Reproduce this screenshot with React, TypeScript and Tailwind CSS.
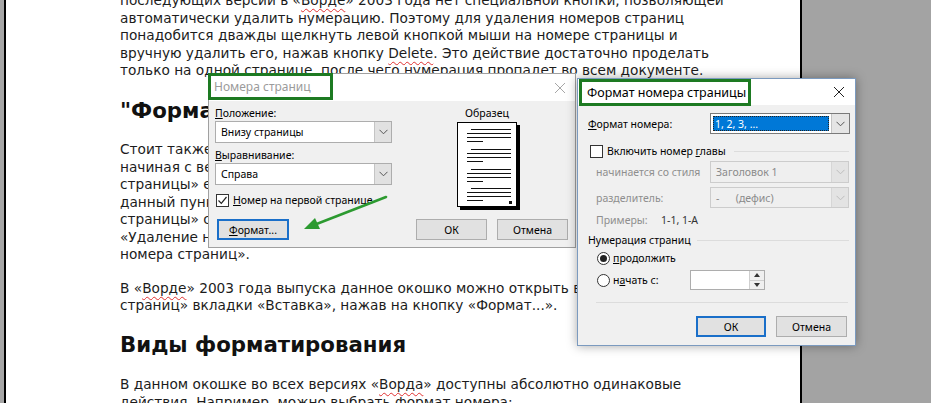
import React from "react";

const ui = "font-['Noto_Sans',sans-serif] text-[10.5px] leading-[16px] text-black whitespace-nowrap";

const Squiggle = ({ children }: { children: React.ReactNode }) => (
  <span className="underline decoration-wavy decoration-[#e03030] decoration-1 underline-offset-[3px]">
    {children}
  </span>
);

const Chevron = ({ color = "#555" }: { color?: string }) => (
  <svg width="9" height="6" viewBox="0 0 9 6">
    <path d="M0.5 0.8 L4.5 4.8 L8.5 0.8" fill="none" stroke={color} strokeWidth="1" />
  </svg>
);

const CloseX = () => (
  <svg width="12" height="12" viewBox="0 0 12 12">
    <path d="M1 1 L11 11 M11 1 L1 11" stroke="#222" strokeWidth="1" />
  </svg>
);

const Select = ({
  value,
  w,
  h = 22,
  disabled = false,
}: {
  value: React.ReactNode;
  w: number;
  h?: number;
  disabled?: boolean;
}) => (
  <div
    style={{ width: w, height: h }}
    className={`flex shrink-0 border ${disabled ? "border-[#cccccc] bg-[#efefef] text-[#8a8a8a]" : "border-[#adadad] bg-white"}`}
  >
    <div className="flex-1 flex items-center pl-[5px] whitespace-pre">{value}</div>
    <div
      className={`w-[17px] flex items-center justify-center border-l ${disabled ? "border-[#d6d6d6] bg-[#e3e3e3]" : "border-[#c4c4c4] bg-[#e1e1e1]"}`}
    >
      <Chevron color={disabled ? "#bdbdbd" : "#555"} />
    </div>
  </div>
);

const Btn = ({ label, w, focused = false }: { label: React.ReactNode; w: number; focused?: boolean }) => (
  <div
    style={{ width: w }}
    className={`h-[21px] flex items-center justify-center bg-[#e1e1e1] ${focused ? "border-2 border-[#1a6fc9]" : "border border-[#adadad]"}`}
  >
    {label}
  </div>
);

const Box = ({ checked = false }: { checked?: boolean }) => (
  <div className="w-[13px] h-[13px] shrink-0 border border-[#333] bg-white flex items-center justify-center">
    {checked && (
      <svg width="11" height="11" viewBox="0 0 11 11">
        <path d="M1.5 5.5 L4.3 8.3 L9.5 2" fill="none" stroke="#222" strokeWidth="1.2" />
      </svg>
    )}
  </div>
);

const Radio = ({ on = false }: { on?: boolean }) => (
  <div className="w-[13px] h-[13px] shrink-0 rounded-full border border-[#333] bg-white flex items-center justify-center">
    {on && <div className="w-[7px] h-[7px] rounded-full bg-[#222]" />}
  </div>
);

const Sample = () => {
  const groups = [6, 26, 46, 65];
  return (
    <div className="w-[60px] h-[85px] border border-black bg-white shadow-[3px_3px_0_#000]">
      <svg width="58" height="83" viewBox="0 0 58 83">
        {groups.map((g) => (
          <g key={g} stroke="#111" strokeWidth="1">
            <line x1="13" y1={g + 0.5} x2="53" y2={g + 0.5} />
            <line x1="9" y1={g + 4.5} x2="53" y2={g + 4.5} />
            <line x1="9" y1={g + 8.5} x2="53" y2={g + 8.5} />
            <line x1="9" y1={g + 12.5} x2="25" y2={g + 12.5} />
          </g>
        ))}
        <rect x="51" y="78" width="3" height="3" fill="#111" />
      </svg>
    </div>
  );
};

// only the parts of the article that show around the dialogs
const PageText = () => (
  <div className="-mt-[8px] font-['DejaVu_Sans',Verdana,sans-serif] text-[13.7px] leading-[17.5px] text-[#1c1c1c] whitespace-nowrap">
    <div>
      <div>
        последующих версии в «<Squiggle>Ворде</Squiggle>» 2003 года нет специальной кнопки, позволяющей
      </div>
      <div>автоматически удалить нумерацию. Поэтому для удаления номеров страниц</div>
      <div>понадобится дважды щелкнуть левой кнопкой мыши на номере страницы и</div>
      <div>
        вручную удалить его, нажав кнопку <Squiggle>Delete</Squiggle>. Это действие достаточно проделать
      </div>
      <div>только на одной странице, после чего нумерация пропадет во всем документе.</div>
    </div>
    <h2 className="mt-[17px] text-[21.3px] leading-[28px] font-bold text-[#111]">"Форма</h2>
    <div className="mt-[16.5px]">
      <div>Стоит также</div>
      <div>начиная с ве</div>
      <div>страницы» е</div>
      <div>данный пунк</div>
      <div>страницы» с</div>
      <div>«Удаление н</div>
      <div>номера страниц».</div>
    </div>
    <div className="mt-[16px]">
      <div>
        В «<Squiggle>Ворде</Squiggle>» 2003 года выпуска данное окошко можно открыть в
      </div>
      <div>страниц» вкладки «Вставка», нажав на кнопку «Формат...».</div>
    </div>
    <h2 className="mt-[16.5px] text-[21.3px] leading-[28px] font-bold text-[#111]">Виды форматирования</h2>
    <div className="mt-[17px]">
      <div>
        В данном окошке во всех версиях «<Squiggle>Ворда</Squiggle>» доступны абсолютно одинаковые
      </div>
      <div>действия. Например, можно выбрать формат номера:</div>
    </div>
  </div>
);

const PageNumbersDialog = () => (
  <div className={`absolute left-[208px] top-[73px] w-[368px] h-[175px] border border-[#a0a0a0] bg-[#f0f0f0] flex flex-col ${ui}`}>
    <div className="h-[27px] shrink-0 bg-white flex items-center justify-end pr-[9px]">
      <div className="opacity-40">
        <CloseX />
      </div>
    </div>
    <div className="absolute -left-[1px] -top-[1px] w-[125px] h-[27px] border-[3px] border-[#1d7a22] flex items-center pl-[3px] text-[12px] text-[#9b9b9b]">
      Номера страниц
    </div>
    <div className="flex-1 pl-[6px] pr-[7px] pt-[4px] flex flex-col">
      <div className="flex">
        <div className="w-[177px] flex flex-col">
          <div>
            <span className="underline">П</span>оложение:
          </div>
          <Select value="Внизу страницы" w={177} />
          <div className="mt-[4px]">
            <span className="underline">В</span>ыравнивание:
          </div>
          <Select value="Справа" w={177} />
          <div className="mt-[7px] flex items-center gap-[4px] pl-[1px]">
            <Box checked />
            <span>
              <span className="underline">Н</span>омер на первой странице
            </span>
          </div>
        </div>
        <div className="ml-[65px] flex flex-col items-center">
          <div className="w-[60px] text-center">Образец</div>
          <div className="mt-[1px]">
            <Sample />
          </div>
        </div>
      </div>
      <div className="mt-[11px] flex items-center">
        <div className="ml-[2px]">
          <Btn
            w={72}
            focused
            label={
              <span>
                <span className="underline">Ф</span>ормат...
              </span>
            }
          />
        </div>
        <div className="ml-auto flex gap-[10px]">
          <Btn w={71} label="ОК" />
          <Btn w={71} label="Отмена" />
        </div>
      </div>
    </div>
  </div>
);

const FormatDialog = () => (
  <div
    className={`absolute left-[577px] top-[78px] w-[279px] h-[268px] border border-[#7b9abf] bg-[#f0f0f0] shadow-[0_0_10px_rgba(0,0,0,0.35)] flex flex-col ${ui}`}
  >
    <div className="h-[26px] shrink-0 bg-white flex items-center justify-end pr-[10px]">
      <CloseX />
    </div>
    <div className="absolute left-[1px] top-0 w-[172px] h-[27px] border-[3px] border-[#1d7a22] flex items-center pl-[5px] text-[12.5px] text-black">
      Формат номера страницы
    </div>
    <div className="flex-1 flex flex-col pr-[5px] pt-[8px]">
      <div className="flex items-center pl-[10px]">
        <span>
          <span className="underline">Ф</span>ормат номера:
        </span>
        <div className="ml-auto w-[140px] h-[21px] flex border border-[#7a7a7a] bg-white">
          <div className="flex-1 p-[2px]">
            <div className="h-full bg-[#0078d7] text-white flex items-center pl-[2px] outline-1 outline-dotted outline-[#222] -outline-offset-1">
              1, 2, 3, ...
            </div>
          </div>
          <div className="w-[18px] flex items-center justify-center border-l border-[#c4c4c4] bg-[#e5e5e5]">
            <Chevron />
          </div>
        </div>
      </div>
      <div className="mt-[9px] flex items-center pl-[12px]">
        <Box />
        <span className="ml-[4px]">
          Включить номер <span className="underline">г</span>лавы
        </span>
        <div className="ml-[8px] flex-1 h-px bg-[#dcdcdc] mr-[1px]" />
      </div>
      <div className="mt-[2px] flex items-center pl-[18px] text-[#8e8e8e]">
        <span>начинается со стиля</span>
        <div className="ml-auto mr-[1px]">
          <Select value="Заголовок 1" w={139} disabled />
        </div>
      </div>
      <div className="mt-[4px] flex items-center pl-[18px] text-[#8e8e8e]">
        <span>разделитель:</span>
        <div className="ml-auto mr-[1px]">
          <Select value={"-      (дефис)"} w={139} h={21} disabled />
        </div>
      </div>
      <div className="mt-[4px] flex pl-[18px]">
        <span className="w-[65px] text-[#8e8e8e]">Примеры:</span>
        <span className="text-[#333]">1-1, 1-А</span>
      </div>
      <div className="mt-[4px] flex items-center pl-[10px]">
        <span>Нумерация страниц</span>
        <div className="ml-[6px] flex-1 h-px bg-[#dcdcdc] mr-[1px]" />
      </div>
      <div className="mt-[2px] flex items-center pl-[19px]">
        <Radio on />
        <span className="ml-[3px]">
          <span className="underline">п</span>родолжить
        </span>
      </div>
      <div className="mt-[4px] flex items-center pl-[19px]">
        <Radio />
        <span className="ml-[3px] w-[62px]">
          н<span className="underline">а</span>чать с:
        </span>
        <div className="ml-[15px] w-[75px] h-[20px] flex border border-[#adadad] bg-white">
          <div className="flex-1" />
          <div className="w-[15px] flex flex-col border-l border-[#cfcfcf] bg-[#f0f0f0]">
            <div className="flex-1 flex items-center justify-center border-b border-[#cfcfcf]">
              <div className="w-0 h-0 border-x-[3.5px] border-x-transparent border-b-[4px] border-b-[#333]" />
            </div>
            <div className="flex-1 flex items-center justify-center">
              <div className="w-0 h-0 border-x-[3.5px] border-x-transparent border-t-[4px] border-t-[#333]" />
            </div>
          </div>
        </div>
      </div>
      <div className="mt-[12px] ml-[18px] mr-[2px] h-px bg-[#dcdcdc]" />
      <div className="mt-[13px] flex justify-end gap-[10px] pr-[3px]">
        <Btn w={70} focused label="ОК" />
        <Btn w={71} label="Отмена" />
      </div>
    </div>
  </div>
);

const Arrow = () => (
  <svg className="absolute left-[298px] top-[190px]" width="96" height="46" viewBox="0 0 96 46">
    <line x1="88" y1="7" x2="16" y2="35" stroke="#2c9a30" strokeWidth="2.5" strokeLinecap="round" />
    <path d="M6 39 L17 28 L22 39 Z" fill="#2c9a30" />
  </svg>
);

export default function App() {
  return (
    <div className="relative w-[931px] h-[403px] overflow-hidden flex bg-white">
      <div className="w-[4px] bg-[#a6a6a6]" />
      <div className="w-[2px] bg-black" />
      <div className="w-[794px] bg-white pl-[114px] overflow-hidden">
        <PageText />
      </div>
      <div className="w-[2px] bg-black" />
      <div className="flex-1 bg-[#a3a3a3]" />
      <PageNumbersDialog />
      <Arrow />
      <FormatDialog />
    </div>
  );
}
